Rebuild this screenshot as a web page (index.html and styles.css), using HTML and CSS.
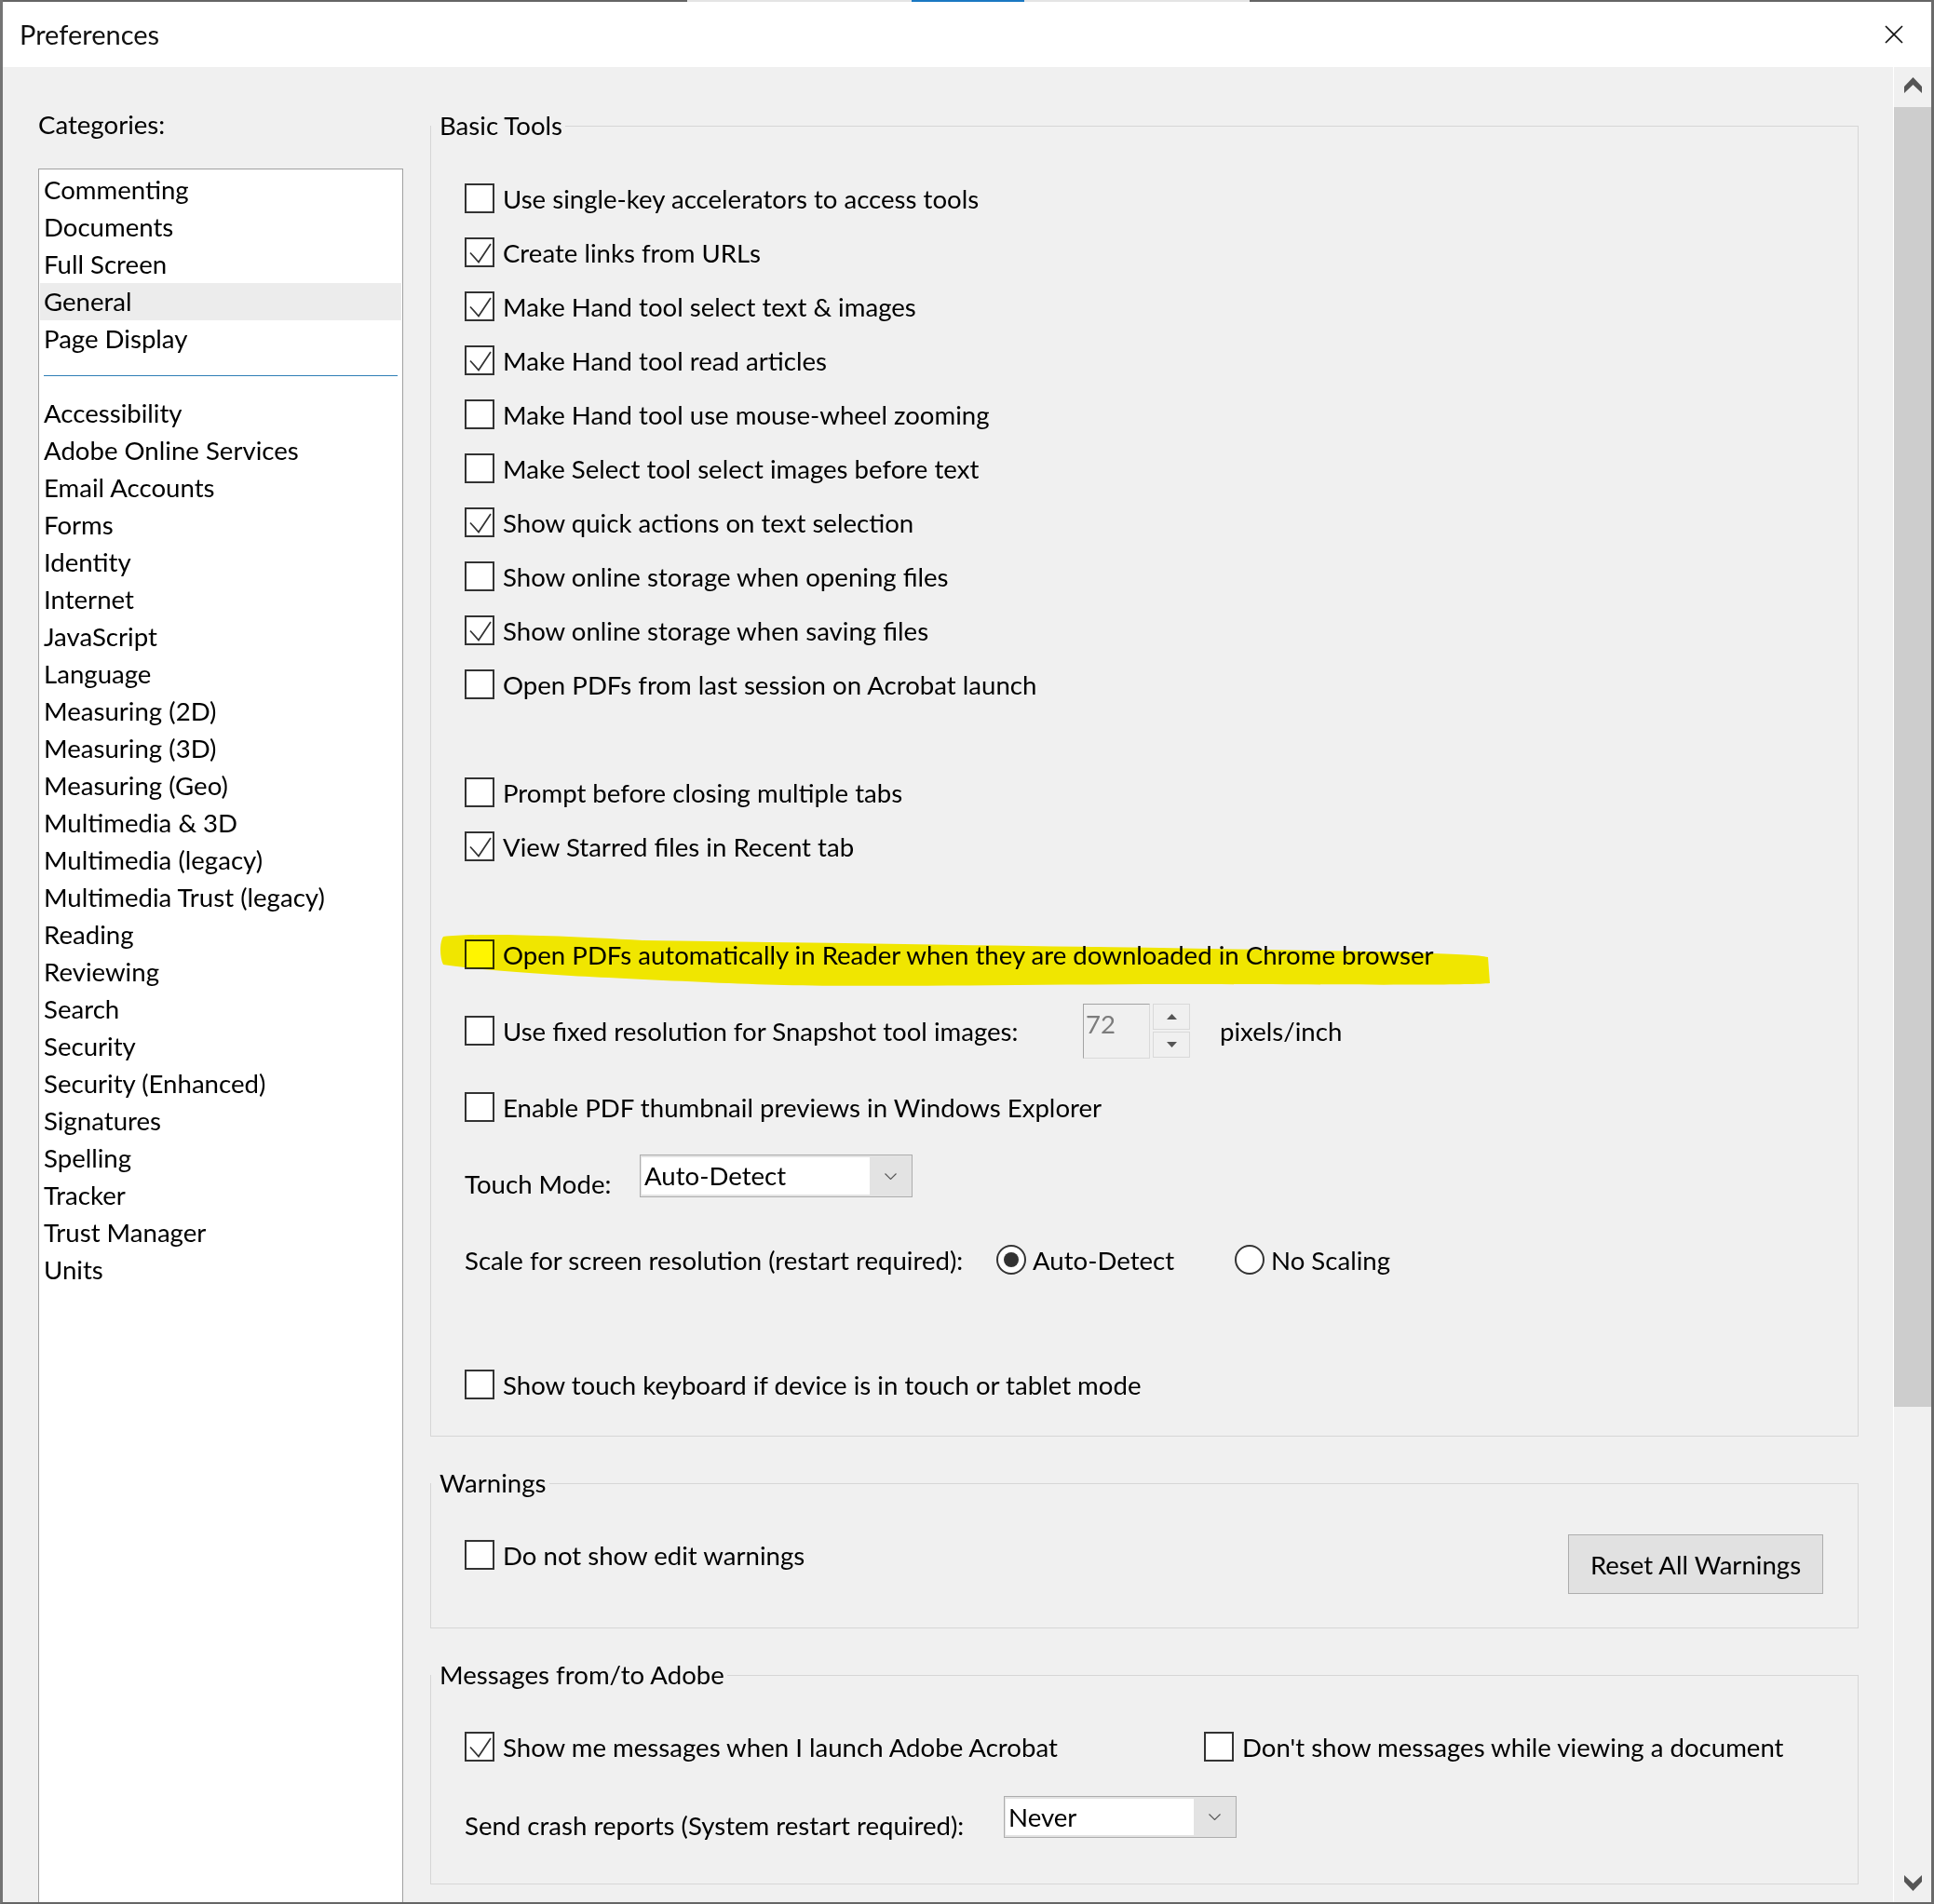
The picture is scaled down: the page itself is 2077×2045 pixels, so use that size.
FILE: index.html
```html
<!DOCTYPE html>
<html lang="en">
<head>
<meta charset="utf-8">
<title>Preferences</title>
<link rel="stylesheet" href="styles.css">
</head>
<body>
<div class="window">
  <div class="topstrip"><span class="seg seg-a"></span><span class="seg seg-b"></span><span class="seg seg-c"></span><span class="seg seg-d"></span><span class="seg seg-e"></span></div>
  <div class="titlebar">
    <span class="title">Preferences</span>
    <svg class="close" viewBox="0 0 20 20"><path d="M1 1 L19 19 M19 1 L1 19" stroke="#111" stroke-width="1.6" fill="none"/></svg>
  </div>
  <div class="content">
    <aside class="sidebar">
      <div class="cat-label">Categories:</div>
      <ul class="listbox">
        <li>Commenting</li>
        <li>Documents</li>
        <li>Full Screen</li>
        <li class="selected">General</li>
        <li>Page Display</li>
        <li class="sep"></li>
        <li>Accessibility</li>
        <li>Adobe Online Services</li>
        <li>Email Accounts</li>
        <li>Forms</li>
        <li>Identity</li>
        <li>Internet</li>
        <li>JavaScript</li>
        <li>Language</li>
        <li>Measuring (2D)</li>
        <li>Measuring (3D)</li>
        <li>Measuring (Geo)</li>
        <li>Multimedia &amp; 3D</li>
        <li>Multimedia (legacy)</li>
        <li>Multimedia Trust (legacy)</li>
        <li>Reading</li>
        <li>Reviewing</li>
        <li>Search</li>
        <li>Security</li>
        <li>Security (Enhanced)</li>
        <li>Signatures</li>
        <li>Spelling</li>
        <li>Tracker</li>
        <li>Trust Manager</li>
        <li>Units</li>
      </ul>
    </aside>

    <main class="main">
      <fieldset class="group group-basic">
        <legend>Basic Tools</legend>
        <div class="group-body">
          <div class="row"><span class="cb"></span><span>Use single-key accelerators to access tools</span></div>
          <div class="row"><span class="cb on"><svg viewBox="0 0 28 28"><polyline points="4,14.5 13,24.5 26,5"/></svg></span><span>Create links from URLs</span></div>
          <div class="row"><span class="cb on"><svg viewBox="0 0 28 28"><polyline points="4,14.5 13,24.5 26,5"/></svg></span><span>Make Hand tool select text &amp; images</span></div>
          <div class="row"><span class="cb on"><svg viewBox="0 0 28 28"><polyline points="4,14.5 13,24.5 26,5"/></svg></span><span>Make Hand tool read articles</span></div>
          <div class="row"><span class="cb"></span><span>Make Hand tool use mouse-wheel zooming</span></div>
          <div class="row"><span class="cb"></span><span>Make Select tool select images before text</span></div>
          <div class="row"><span class="cb on"><svg viewBox="0 0 28 28"><polyline points="4,14.5 13,24.5 26,5"/></svg></span><span>Show quick actions on text selection</span></div>
          <div class="row"><span class="cb"></span><span>Show online storage when opening files</span></div>
          <div class="row"><span class="cb on"><svg viewBox="0 0 28 28"><polyline points="4,14.5 13,24.5 26,5"/></svg></span><span>Show online storage when saving files</span></div>
          <div class="row"><span class="cb"></span><span>Open PDFs from last session on Acrobat launch</span></div>
          <div class="spacer"></div>
          <div class="row"><span class="cb"></span><span>Prompt before closing multiple tabs</span></div>
          <div class="row"><span class="cb on"><svg viewBox="0 0 28 28"><polyline points="4,14.5 13,24.5 26,5"/></svg></span><span>View Starred files in Recent tab</span></div>
          <div class="spacer"></div>
          <div class="row"><span class="cb"></span><span>Open PDFs automatically in Reader when they are downloaded in Chrome browser</span></div>
          <div class="row mt">
            <span class="cb"></span><span class="lbl-fixed">Use fixed resolution for Snapshot tool images:</span>
            <span class="spinfield">72</span>
            <span class="spin">
              <span><svg viewBox="0 0 11 6"><polygon points="0,6 5.5,0 11,6" fill="#555"/></svg></span>
              <span><svg viewBox="0 0 11 6"><polygon points="0,0 11,0 5.5,6" fill="#555"/></svg></span>
            </span>
            <span class="unit">pixels/inch</span>
          </div>
          <div class="row mt"><span class="cb"></span><span>Enable PDF thumbnail previews in Windows Explorer</span></div>
          <div class="row mt">
            <span class="lbl-touch">Touch Mode:</span>
            <span class="select select-touch"><span class="select-val">Auto-Detect</span><span class="select-arrow"><svg viewBox="0 0 13 7"><polyline points="0.5,0.5 6.5,6.5 12.5,0.5"/></svg></span></span>
          </div>
          <div class="row mt">
            <span class="lbl-scale">Scale for screen resolution (restart required):</span>
            <span class="radio on"></span><span class="opt-auto">Auto-Detect</span>
            <span class="radio"></span><span class="opt-none">No Scaling</span>
          </div>
          <div class="row mt-lg"><span class="cb"></span><span>Show touch keyboard if device is in touch or tablet mode</span></div>
        </div>
      </fieldset>

      <fieldset class="group group-warn">
        <legend>Warnings</legend>
        <div class="group-body">
          <div class="row row-warn">
            <span class="check warn-check"><span class="cb"></span><span>Do not show edit warnings</span></span>
            <span class="button">Reset All Warnings</span>
          </div>
        </div>
      </fieldset>

      <fieldset class="group group-msg">
        <legend>Messages from/to Adobe</legend>
        <div class="group-body">
          <div class="row">
            <span class="check first"><span class="cb on"><svg viewBox="0 0 28 28"><polyline points="4,14.5 13,24.5 26,5"/></svg></span><span>Show me messages when I launch Adobe Acrobat</span></span>
            <span class="check"><span class="cb"></span><span>Don't show messages while viewing a document</span></span>
          </div>
          <div class="row mt-crash">
            <span class="lbl-crash">Send crash reports (System restart required):</span>
            <span class="select select-crash"><span class="select-val">Never</span><span class="select-arrow"><svg viewBox="0 0 13 7"><polyline points="0.5,0.5 6.5,6.5 12.5,0.5"/></svg></span></span>
          </div>
        </div>
      </fieldset>
    </main>

    <div class="scrollbar">
      <div class="sb-btn up"><svg viewBox="0 0 19 17"><polygon points="0,10 9.5,0 19,10 19,17 9.5,8 0,17"/></svg></div>
      <div class="sb-thumb"></div>
      <div class="sb-track"></div>
      <div class="sb-btn down"><svg viewBox="0 0 19 17"><polygon points="0,0 9.5,9 19,0 19,7 9.5,17 0,7"/></svg></div>
    </div>
  </div>

  <svg class="marker" viewBox="0 0 1134 66"><path d="M6,8 C40,4 120,6 220,12 C500,16 800,20 1000,24 C1080,26 1115,27 1128,30 L1130,58 C1100,61 900,59 760,59 C600,60 450,62 372,60 C300,58 200,53 143,50 C80,46 30,42 6,38 C2,30 2,14 6,8 Z"/></svg>
</div>
</body>
</html>
```
FILE: styles.css
```css
* { box-sizing: border-box; }

html, body {
  margin: 0;
  padding: 0;
}

body {
  font-family: Lato, "Open Sans", sans-serif;
  font-size: 27.6px;
  color: #000;
  background: #f0f0f0;
}

.window {
  position: relative;
  width: 2077px;
  height: 2045px;
  overflow: hidden;
  background: #f0f0f0;
  border-left: 3px solid #747474;
  border-right: 3px solid #6a6a6a;
  border-bottom: 2px solid #666;
  display: flex;
  flex-direction: column;
}

/* strip of the window behind */
.topstrip { display: flex; height: 2px; flex: none; }
.seg-a { width: 735px; background: #656565; }
.seg-b { width: 241px; background: #e4e4e4; }
.seg-c { width: 121px; background: #1a78c2; }
.seg-d { width: 242px; background: #e4e4e4; }
.seg-e { flex: 1; background: #656565; }

.titlebar {
  height: 70px;
  flex: none;
  background: #fff;
  display: flex;
  align-items: center;
  padding: 0 30px 0 18px;
}
.title { font-size: 29px; line-height: 36px; color: #111; }
.close { margin-left: auto; width: 20px; height: 20px; }

.content { flex: 1; display: flex; min-height: 0; }

/* categories */
.sidebar {
  width: 430px;
  flex: none;
  padding: 45px 0 0 38px;
  display: flex;
  flex-direction: column;
}
.cat-label { line-height: 34px; }
.listbox {
  flex: 1;
  margin: 30px 0 0;
  padding: 2px 0 0;
  list-style: none;
  background: #fff;
  border: 1px solid #a0a0a0;
  border-bottom: none;
}
.listbox li {
  height: 40px;
  line-height: 40px;
  margin: 0 1px;
  padding-left: 4px;
  white-space: nowrap;
}
.listbox li.selected { background: #ececec; }
.listbox li.sep {
  height: 1px;
  margin: 19px 5px 20px;
  padding: 0;
  background: #2f7fb6;
}

/* main panel */
.main {
  width: 1534px;
  flex: none;
  margin-left: 29px;
  padding-top: 46px;
  overflow: hidden;
}

.group {
  margin: 0;
  padding: 0;
  min-width: 0;
  border: 1px solid #d6d6d6;
}
.group + .group { margin-top: 33px; }
.group legend {
  margin-left: 0;
  padding: 0 3px 0 9px;
  line-height: 34px;
  font-size: 27.6px;
}
.group-body { padding: 32px 37px 26px 36px; }
.group-warn .group-body { padding: 38px 37px 36px 36px; }
.group-msg .group-body { padding: 31px 37px 34px 36px; }

.row {
  display: flex;
  align-items: center;
  height: 58px;
  white-space: nowrap;
}
.spacer { height: 58px; }
.row.mt { margin-top: 24px; }
.row.mt-lg { margin-top: 76px; }
.row.mt-crash { margin-top: 26px; }

.check { display: flex; align-items: center; }
.check.first { width: 794px; }

.cb {
  width: 32px;
  height: 32px;
  flex: none;
  margin-right: 9px;
  border: 2px solid #333;
  background: #fff;
  display: flex;
}
.cb svg { width: 100%; height: 100%; }
.cb polyline { fill: none; stroke: #333; stroke-width: 1.7; }

.radio {
  width: 32px;
  height: 32px;
  flex: none;
  border-radius: 50%;
  border: 2px solid #333;
  background: #fff;
  display: flex;
  align-items: center;
  justify-content: center;
}
.radio.on::after {
  content: "";
  width: 16px;
  height: 16px;
  border-radius: 50%;
  background: #333;
}

.lbl-fixed { width: 623px; }
.lbl-touch { width: 188px; }
.lbl-scale { width: 571px; }
.lbl-crash { width: 579px; }
.opt-auto { width: 217px; margin-left: 7px; }
.opt-none { margin-left: 7px; }

.spinfield {
  width: 72px;
  height: 59px;
  flex: none;
  border: 1px solid;
  border-color: #a3a3a3 #dadada #dadada #a3a3a3;
  color: #7c7c7c;
  padding: 4px 0 0 2px;
  line-height: 34px;
}
.spin {
  width: 40px;
  height: 58px;
  flex: none;
  margin-left: 3px;
  display: flex;
  flex-direction: column;
  gap: 2px;
}
.spin > span {
  flex: 1;
  border: 1px solid #d9d9d9;
  display: flex;
  align-items: center;
  justify-content: center;
}
.spin svg { width: 11px; height: 6px; }
.unit { margin-left: 32px; }

.select {
  display: flex;
  flex: none;
  border: 1px solid #adadad;
  background: #e3e3e3;
  padding: 2px 0 2px 1px;
}
.select-touch { width: 293px; height: 46px; margin-bottom: 16px; }
.select-crash { width: 250px; height: 45px; margin-bottom: 17px; }
.select-val {
  flex: 1;
  background: #fff;
  line-height: 40px;
  padding-left: 3px;
}
.select-arrow {
  width: 45px;
  display: flex;
  align-items: center;
  justify-content: center;
}
.select-arrow svg { width: 13px; height: 7px; }
.select-arrow polyline { fill: none; stroke: #555; stroke-width: 1.1; }

.row-warn { height: 64px; justify-content: space-between; }
.warn-check { margin-bottom: 20px; }
.button {
  width: 274px;
  height: 64px;
  border: 1px solid #adadad;
  background: #e1e1e1;
  display: flex;
  align-items: center;
  justify-content: center;
}

/* scrollbar */
.scrollbar {
  width: 41px;
  flex: none;
  margin-left: auto;
  border-left: 1px solid #fff;
  background: #f0f0f0;
  display: flex;
  flex-direction: column;
}
.sb-btn {
  display: flex;
  align-items: center;
  justify-content: center;
  flex: none;
}
.sb-btn.up { height: 43px; padding-bottom: 4px; }
.sb-btn.down { height: 41px; }
.sb-btn svg { width: 19px; height: 17px; fill: #555; }
.sb-thumb { height: 1396px; flex: none; background: #cdcdcd; }
.sb-track { flex: 1; }

/* yellow marker stroke drawn over the Chrome option */
.marker {
  position: absolute;
  left: 467px;
  top: 998px;
  width: 1134px;
  height: 66px;
  pointer-events: none;
  mix-blend-mode: multiply;
}
.marker path { fill: #fff500; }
```
